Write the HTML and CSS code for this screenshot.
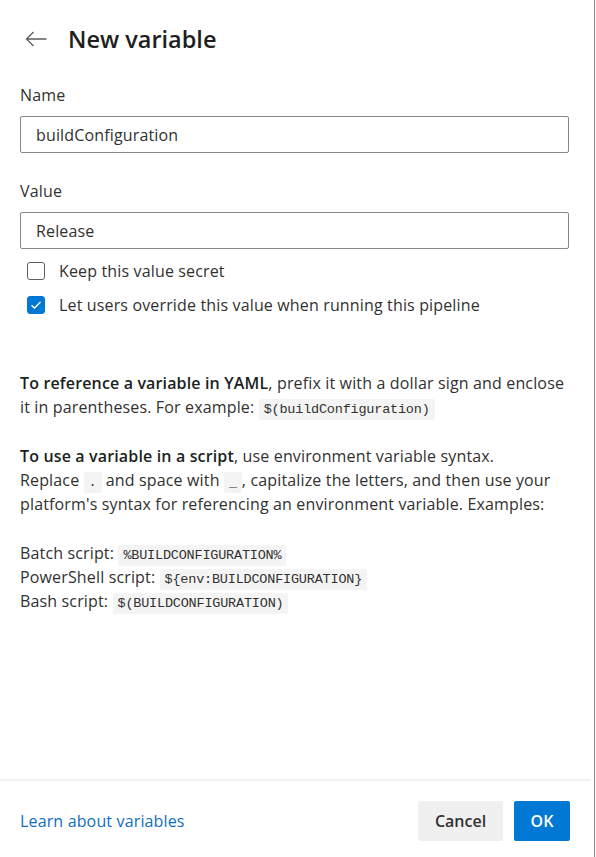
FILE: index.html
```html
<!DOCTYPE html>
<html>
<head>
<meta charset="utf-8">
<link rel="stylesheet" href="styles.css">
</head>
<body>
<div class="panel">
  <div class="content">
    <div class="header">
      <button class="back" aria-label="Back">
        <svg width="22" height="16" viewBox="0 0 22 16"><path d="M8.5 1 L1.5 8 L8.5 15 M1.5 8 H21.5" fill="none" stroke="#605e5c" stroke-width="1.3"/></svg>
      </button>
      <h1 class="title">New variable</h1>
    </div>

    <div class="field">
      <label class="label">Name</label>
      <div class="input">buildConfiguration</div>
    </div>
    <div class="field field-value">
      <label class="label">Value</label>
      <div class="input">Release</div>
    </div>

    <div class="checks">
      <div class="check"><span class="box"></span><span>Keep this value secret</span></div>
      <div class="check"><span class="box checked"><svg width="12" height="10" viewBox="0 0 12 10"><path d="M1.5 5.2 L4.5 8 L10.5 2" fill="none" stroke="#fff" stroke-width="1.4"/></svg></span><span>Let users override this value when running this pipeline</span></div>
    </div>

    <div class="help">
      <p><b>To reference a variable in YAML</b>, prefix it with a dollar sign and enclose it in parentheses. For example: <code>$(buildConfiguration)</code></p>
      <p><b>To use a variable in a script</b>, use environment variable syntax.<br>Replace <code>.</code> and space with <code>_</code>, capitalize the letters, and then use your platform's syntax for referencing an environment variable. Examples:</p>
      <p>Batch script: <code>%BUILDCONFIGURATION%</code><br>PowerShell script: <code>${env:BUILDCONFIGURATION}</code><br>Bash script: <code>$(BUILDCONFIGURATION)</code></p>
    </div>
  </div>

  <div class="footer">
    <a class="link" href="#">Learn about variables</a>
    <div class="buttons">
      <button class="btn btn-cancel">Cancel</button>
      <button class="btn btn-ok">OK</button>
    </div>
  </div>
</div>
</body>
</html>
```

FILE: styles.css
```css
* { box-sizing: border-box; }
html, body { margin: 0; padding: 0; background: #fff; }
body {
  font-family: "Open Sans", "Noto Sans", sans-serif;
  color: #323130;
  font-size: 16px;
  letter-spacing: 0.15px;
}
.panel {
  width: 595px;
  height: 857px;
  border-right: 1px solid #8a8886;
  display: flex;
  flex-direction: column;
}
.content {
  flex: 1;
  padding: 0 25px 0 20px;
}
.header {
  display: flex;
  align-items: center;
  height: 78px;
}
.back {
  border: 0;
  background: none;
  padding: 0;
  margin: 0 21px 0 5px;
  width: 22px;
  height: 16px;
  display: flex;
}
.title {
  margin: 0;
  font-size: 23.5px;
  font-weight: 600;
  color: #201f1e;
  letter-spacing: 0;
}
.field { display: flex; flex-direction: column; }
.label {
  line-height: 22px;
  margin-top: 6px;
  margin-bottom: 10px;
}
.field-value .label { margin-top: 27px; }
.input {
  height: 37px;
  border: 1px solid #8a8886;
  border-radius: 2px;
  padding: 0 15px;
  display: flex;
  align-items: center;
}
.checks {
  display: flex;
  flex-direction: column;
  gap: 16px;
  margin-top: 13px;
  padding-left: 7px;
}
.check {
  display: flex;
  align-items: center;
  gap: 14px;
  height: 18px;
  line-height: 18px;
}
.box {
  width: 18px;
  height: 18px;
  border: 1px solid #605e5c;
  border-radius: 3px;
  flex: none;
  display: flex;
  align-items: center;
  justify-content: center;
}
.box.checked {
  background: #0078d4;
  border-color: #0078d4;
}
.help { margin-top: 57px; }
.help p {
  margin: 0 0 25px;
  line-height: 24px;
}
.help b { font-weight: 600; color: #201f1e; }
code {
  font-family: "Liberation Mono", "DejaVu Sans Mono", monospace;
  font-size: 13.5px;
  line-height: 1;
  letter-spacing: -0.2px;
  background: #f4f4f4;
  padding: 3px 5px;
  border-radius: 2px;
}
.footer {
  border-top: 2px solid #f3f2f1;
  height: 78px;
  margin-right: 3px;
  display: flex;
  align-items: center;
  justify-content: space-between;
  padding: 4px 21px 0 20px;
}
.link {
  color: #106ebe;
  text-decoration: none;
}
.buttons { display: flex; gap: 11px; }
.btn {
  height: 40px;
  border: 0;
  border-radius: 2px;
  font-family: inherit;
  font-size: 16px;
  font-weight: 600;
  padding: 0;
}
.btn-cancel { background: #f0f0f0; color: #323130; width: 85px; }
.btn-ok { background: #0078d4; color: #fff; width: 56px; }
```
